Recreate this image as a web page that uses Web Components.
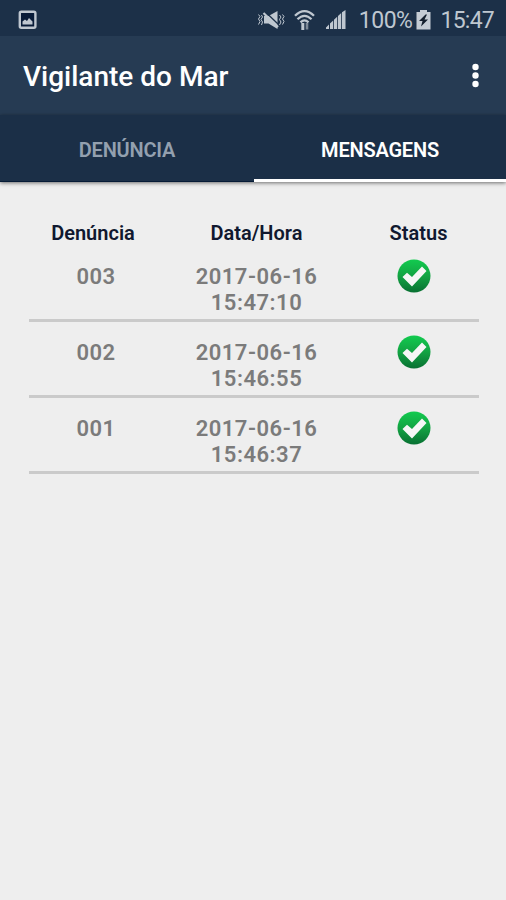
<!DOCTYPE html>
<html lang="pt-BR">
<head>
<meta charset="utf-8">
<title>Vigilante do Mar</title>
<style>
  body {
    margin: 0;
    background: #eee;
    font-family: Roboto, "Liberation Sans", sans-serif;
  }
</style>
</head>
<body>
<vigilante-app></vigilante-app>

<script>
class StatusBar extends HTMLElement {

  constructor() {
    super();
    this.attachShadow({mode: 'open'});
  }

  connectedCallback() {
    this.shadowRoot.innerHTML = `<style>
        :host {
          display: flex;
          align-items: center;
          box-sizing: border-box;
          height: 36px;
          padding: 5px 12px 0 18px;
          background: #1c3048;
          color: #bfc7d0;
          font-size: 23px;
          line-height: 31px;
        }
        svg { display: block; flex: none; margin-bottom: 2px; }
        .space { flex: 1; }
        .wifi { margin-left: 9px; }
        .signal { margin-left: 11px; }
        .battery { margin-left: 4px; }
        .level { margin-left: 13px; letter-spacing: -0.5px; }
        .clock { margin-left: 9px; letter-spacing: -0.75px; }
      </style>
      <svg width="19" height="20" viewBox="0 0 19 20">
        <rect x="1.8" y="1.8" width="15.6" height="16" rx="1.5" fill="#081b38" stroke="#bfc7d0" stroke-width="2.4"/>
        <path d="M4.500 14.500v-3l2.500-2 2 1.500 2-3 3.500 3.500v3z" fill="#bfc7d0"/>
      </svg>
      <div class="space"></div>
      <svg width="28" height="20" viewBox="0 0 28 20" fill="none" stroke="#bfc7d0">
        <path d="M7 6h4.500L20.500 1v18l-9-5.500H7z" fill="#bfc7d0" stroke="none"/>
        <path d="M9 2.500l12.500 12" stroke="#1c3048" stroke-width="1.300"/>
        <path d="M6.500 3l14.500 14" stroke-width="2.200"/>
        <path d="M1.500 4.500l1.500 2-1.500 2.500 1.500 2.500-1.500 3M4.500 5l1 2-1.500 2.500 1.500 2.500-1 3M22.500 5l1.500 2-1.500 2.500 1.500 2.500-1.500 3M25.500 4.500l1.500 2-1.500 2.500 1.500 2.500-1.500 3" stroke-width="1"/>
      </svg>
      <svg class="wifi" width="21" height="22" viewBox="0 0 21 22" fill="none" stroke="#bfc7d0" stroke-width="2.300">
        <path d="M1 6.800q9.500-9.500 19 0M3.500 10.300q7-7 14 0M6.500 13.300q4-3.800 8 0"/>
        <path d="M8.800 21v-7" stroke-width="3"/>
        <path d="M13 14v6.500" stroke="#7d8998" stroke-width="2.600"/>
      </svg>
      <svg class="signal" width="20" height="20" viewBox="0 0 20 20" fill="#bfc7d0">
        <path d="M0 19v-1.500l3-3V19zM4 19v-5.500l3.200-3V19zM8 19V9.700l3.200-3V19zM12 19V6l3.200-3v16zM16 19V2.300L19.500 0v19z"/>
      </svg>
      <span class="level">100%</span>
      <svg class="battery" width="15" height="20" viewBox="0 0 15 20">
        <path d="M4 0h7v2h3.500v17.500H.5V2H4z" fill="#c5ccd4"/>
        <path d="M9.500 4.500L3 11h3.500L5 16.500l7-7H8.500l2.500-5z" fill="#15202e"/>
      </svg>
      <span class="clock">15:47</span>`;
  }
}

class AppToolbar extends HTMLElement {

  constructor() {
    super();
    this.attachShadow({mode: 'open'});
  }

  connectedCallback() {
    this.shadowRoot.innerHTML = `<style>
        :host {
          display: flex;
          align-items: center;
          justify-content: space-between;
          box-sizing: border-box;
          height: 79px;
          padding: 3px 26px 0 23px;
          background: #263b53;
          color: #fff;
        }
        h1 {
          margin: 0;
          font-size: 28px;
          font-weight: 500;
          line-height: 36px;
        }
        svg { display: block; margin-bottom: 4px; }
      </style>
      <h1><slot></slot></h1>
      <svg width="9" height="25" viewBox="0 0 9 25" fill="#fff">
        <circle cx="4.500" cy="4" r="3.200"/>
        <circle cx="4.500" cy="12.500" r="3.200"/>
        <circle cx="4.500" cy="21" r="3.200"/>
      </svg>`;
  }
}

class TabBar extends HTMLElement {

  constructor() {
    super();
    this.attachShadow({mode: 'open'});
  }

  connectedCallback() {
    this.shadowRoot.innerHTML = `<style>
        :host {
          display: grid;
          grid-template-columns: 254px 1fr;
          height: 67px;
          background: #1b2f47;
          box-shadow: 0 1px 4px rgba(0, 0, 0, .55);
        }
      </style>
      <slot></slot>`;
  }
}

class TabItem extends HTMLElement {

  constructor() {
    super();
    this.attachShadow({mode: 'open'});
  }

  connectedCallback() {
    this.shadowRoot.innerHTML = `<style>
        :host {
          box-sizing: border-box;
          padding-top: 21px;
          border-bottom: 1px solid #061b36;
          color: #93a0af;
          font-size: 20px;
          font-weight: 600;
          line-height: 28px;
          letter-spacing: -.2px;
          text-align: center;
        }
        :host([selected]) {
          border-bottom: 3px solid #fff;
          color: #fff;
        }
      </style>
      <slot></slot>`;
  }
}

class MessageRow extends HTMLElement {

  constructor() {
    super();
    this.attachShadow({mode: 'open'});
  }

  connectedCallback() {
    this.shadowRoot.innerHTML = `<style>
        :host {
          display: grid;
          grid-template-columns: 134px 187px 1fr;
          box-sizing: border-box;
          height: 76px;
          padding-top: 18px;
          border-bottom: 3px solid #cacaca;
          color: #7b7b7b;
          font-size: 22px;
          font-weight: 600;
          line-height: 26px;
          letter-spacing: .5px;
          text-align: center;
        }
        svg { display: block; margin: -5px auto 0 47px; }
      </style>
      <div>${this.getAttribute('code')}</div>
      <div>${this.getAttribute('date')}<br>${this.getAttribute('time')}</div>
      <svg width="34" height="34" viewBox="0 0 34 34">
        <defs>
          <linearGradient id="green" x1="0" y1="0" x2="0" y2="1">
            <stop offset="0" stop-color="#12cb4f"/>
            <stop offset=".5" stop-color="#13a343"/>
            <stop offset="1" stop-color="#087032"/>
          </linearGradient>
        </defs>
        <circle cx="17" cy="17" r="16.500" fill="url(#green)"/>
        <path d="M5.500 18l4.500-4.300 5 4.300L25 7.500l4.500 4.500L15 27.500z" fill="#f6f6f6"/>
      </svg>`;
  }
}

class MessageList extends HTMLElement {

  constructor() {
    super();
    this.attachShadow({mode: 'open'});
    this.messages = [
      {code: '003', date: '2017-06-16', time: '15:47:10'},
      {code: '002', date: '2017-06-16', time: '15:46:55'},
      {code: '001', date: '2017-06-16', time: '15:46:37'}
    ];
  }

  connectedCallback() {
    const rows = this.messages.map(
      (m) => `<message-row code="${m.code}" date="${m.date}" time="${m.time}"></message-row>`
    );

    this.shadowRoot.innerHTML = `<style>
        :host {
          display: block;
          padding: 37px 27px 0 29px;
        }
        header {
          display: grid;
          grid-template-columns: 162px 165px 159px;
          height: 27px;
          margin: 0 -20px 0 -17px;
          color: #10182f;
          font-size: 20px;
          font-weight: 600;
          line-height: 28px;
          text-align: center;
        }
      </style>
      <header><span>Denúncia</span><span>Data/Hora</span><span>Status</span></header>
      ${rows.join('')}`;
  }
}

class VigilanteApp extends HTMLElement {

  constructor() {
    super();
    this.attachShadow({mode: 'open'});
  }

  connectedCallback() {
    this.shadowRoot.innerHTML = `<style>
        :host {
          display: flex;
          flex-direction: column;
          min-height: 900px;
          background: #eee;
        }
      </style>
      <status-bar></status-bar>
      <app-toolbar>Vigilante do Mar</app-toolbar>
      <tab-bar>
        <tab-item>DENÚNCIA</tab-item>
        <tab-item selected>MENSAGENS</tab-item>
      </tab-bar>
      <message-list></message-list>`;
  }
}

customElements.define('status-bar', StatusBar);
customElements.define('app-toolbar', AppToolbar);
customElements.define('tab-bar', TabBar);
customElements.define('tab-item', TabItem);
customElements.define('message-row', MessageRow);
customElements.define('message-list', MessageList);
customElements.define('vigilante-app', VigilanteApp);
</script>
</body>
</html>
